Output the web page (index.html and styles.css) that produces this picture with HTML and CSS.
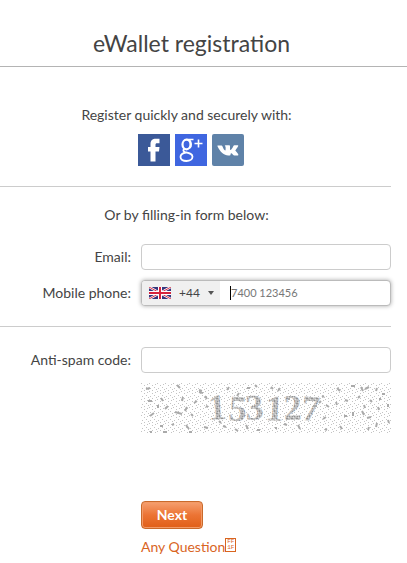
FILE: index.html
```html
<!DOCTYPE html>
<html lang="en">
<head>
    <meta charset="UTF-8">
    <meta name="viewport" content="width=device-width, initial-scale=1.0">
    <title>eWallet registration</title>
    <link rel="stylesheet" href="styles.css">
</head>
<body>
    <header class="header">
        <h1>eWallet registration</h1>
    </header>
    <main class="content">
        <section class="social">
            <p class="intro">Register quickly and securely with:</p>
            <div class="social-links">
                <a href="#facebook" aria-label="Facebook">
                    <svg width="32" height="32" viewBox="0 0 32 32">
                        <rect width="32" height="32" fill="#3b5998"/>
                        <path fill="#fff" d="M12.500 27.500V17.500H10V13h2.500V10c0-3.500 2-5.300 5.300-5.300h3.700v4.500h-2.400c-1.300 0-1.600.5-1.600 1.700V13h4l-.5 4.500h-3.500v10z"/>
                    </svg>
                </a>
                <a href="#google" aria-label="Google Plus">
                    <svg width="32" height="32" viewBox="0 0 32 32" fill="none" stroke="#fff">
                        <rect width="32" height="32" fill="#3f66e0" stroke="none"/>
                        <ellipse cx="11.500" cy="10.500" rx="4" ry="4.800" stroke-width="2.200"/>
                        <path stroke-width="1.400" d="M18.500 5.500h-7M14.500 6c2 2 2.500 6 .3 8"/>
                        <path stroke-width="1.800" d="M9.500 14.800c-2 1.700-1.200 2.700.5 3.200 4 1 7.500 1.500 7.500 4.800 0 2.500-2.700 4.200-6 4.200-3.700 0-6-1.500-6-3.900 0-2.600 2.400-4.100 5.500-4.600"/>
                        <path stroke-width="1.600" d="M23.500 5.500v8M19.500 9.500h8"/>
                    </svg>
                </a>
                <a href="#vk" aria-label="VK">
                    <svg width="32" height="32" viewBox="0 0 32 32">
                        <rect width="32" height="32" rx="2" fill="#5f82a8"/>
                        <path fill="#fff" d="M6 11.500h3.500c.5 0 .7.300.9.700.8 2.200 2 4.200 2.700 4.200.4 0 .5-.4.500-1.200v-2c-.1-1-.8-1-.8-1.400 0-.3.300-.6.800-.6h3.600c.6 0 .8.300.8.900v3.100c0 .5.200.7.400.7.700 0 2.200-2.200 3-4 .2-.4.500-.7 1-.7h3c.9 0 1 .5.700 1-.6 1.500-2.800 4-2.800 4.300 0 .5 2.500 2.500 3 3.900.3.700-.2 1.100-.9 1.100h-3c-1 0-2.200-2.300-3.200-2.300-.9 0-.3 2.300-1.500 2.300h-1.500c-4 0-8.200-3.500-10.700-9.200-.2-.5-.1-.8.500-.8z"/>
                    </svg>
                </a>
            </div>
        </section>
        <form class="form">
            <p class="intro">Or by filling-in form below:</p>
            <div class="row">
                <label for="email">Email:</label>
                <input class="field" type="email" id="email" name="email">
            </div>
            <div class="row">
                <label for="phone">Mobile phone:</label>
                <div class="field phone">
                    <div class="country">
                        <svg width="22" height="12" viewBox="0 0 22 12">
                            <rect width="22" height="12" fill="#35357c"/>
                            <path stroke="#fff" stroke-width="2.400" d="M0 0l22 12M22 0L0 12"/>
                            <path stroke="#d6344c" stroke-width="1" d="M0 0l22 12M22 0L0 12"/>
                            <path stroke="#fff" stroke-width="4" d="M11 0v12M0 6h22"/>
                            <path stroke="#d6233c" stroke-width="2" d="M11 0v12M0 6h22"/>
                        </svg>
                        <select class="code" name="code" aria-label="Country code">
                            <option selected>+44</option>
                        </select>
                        <svg width="6" height="4" viewBox="0 0 6 4"><path fill="#555" d="M0 0h6L3 4z"/></svg>
                    </div>
                    <span class="caret"></span>
                    <input class="number" type="tel" id="phone" name="phone" placeholder="7400 123456">
                </div>
            </div>
            <div class="row antispam">
                <label for="captcha">Anti-spam code:</label>
                <input class="field" type="text" id="captcha" name="captcha">
            </div>
            <div class="row">
                <svg class="captcha" width="250" height="50" viewBox="0 0 250 50">
                    <defs>
                        <pattern id="dots" width="8" height="8" patternUnits="userSpaceOnUse">
                            <path fill="#c4c4c4" d="M0 0h1v1H0zM3 2h1v1H3zM6 1h1v1H6zM1 5h1v1H1zM5 4h1v1H5zM7 6h1v1H7zM3 7h1v1H3z"/>
                        </pattern>
                        <pattern id="grain" width="5" height="5" patternUnits="userSpaceOnUse">
                            <path fill="#bdbdbd" d="M0 0h5v5H0z"/>
                            <path fill="#939393" d="M0 0h2v1H0zM3 2h1v2H3zM1 3h1v1H1z"/>
                            <path fill="#e2e2e2" d="M4 1h1v1H4zM2 4h1v1H2z"/>
                        </pattern>
                    </defs>
                    <rect width="250" height="50" fill="url(#dots)"/>
                    <text class="captcha-text" x="68 87 105 124 143 160" y="37" rotate="-4 4 -3 3 -2 4" fill="url(#grain)">153127</text>
                    <path fill="none" stroke="#aaa" stroke-width="2" d="M5 6l4-1M36 2l3 3M58 9l4 1M7 18h4M20 15l2 3M41 18l1-4M53 20l3-2M17 25v-3M24 26l3-3M9 33l4-3M34 29l7 2M44 28l2-4M50 31l2 2M19 43h3M31 42l2-1M45 42l3 4M22 49h4M48 49h3M9 49h2M58 7l3 1M86 7l2-3M106 5h3M114 2l2 2M130 4l2 2M137 8l2-3M98 10l-2 3M148 15v2M181 14l2-1M196 5l3 3M210 3h4M220 4l2 4M224 6l4-2M235 8l1-3M241 11h3M217 15l2-2M178 20l2-2M172 23h4M185 22l3 2M195 19l1 3M204 17l3 1M223 22l1 3M229 17l2 2M239 15v2M247 21v3M212 29v4M221 28l2 4M237 24l1 3M182 36l3-2M203 33h3M226 35l4-1M247 37l1 3M236 40l-1 4M227 47l1-3M199 43l2 3M184 46l2 1M143 41l3 1M157 42l2 4M134 45h2M116 47h3M105 42l2 4M82 43l3 1M94 46l3 2M78 38l2 2M64 13l2 3M65 23l2 1M63 44l4 1"/>
                </svg>
            </div>
            <div class="row actions">
                <button class="next" type="submit">Next</button>
            </div>
            <div class="row">
                <a class="question" href="#help">Any Question<span class="glyph">FF<br>1F</span></a>
            </div>
        </form>
    </main>
</body>
</html>
```
FILE: styles.css
```css
* { box-sizing: border-box; }
body {
    margin: 0;
    background: #fff;
    color: #444;
    font-family: Lato, "Open Sans", sans-serif;
    font-size: 14px;
    line-height: 20px;
}
h1, p { margin: 0; }
.header {
    padding: 27px 24px 7px 0;
    border-bottom: 1px solid #b4b4b4;
    text-align: center;
}
h1 {
    font-size: 23px;
    font-weight: normal;
    line-height: 32px;
    color: #444;
}
.content { margin-right: 16px; }
.intro {
    padding-right: 18px;
    text-align: center;
}
.social {
    padding: 38px 0 20px;
    border-bottom: 1px solid #ccc;
}
.social-links {
    display: flex;
    justify-content: center;
    gap: 5px;
    padding: 9px 9px 0 0;
}
.social-links a, .social-links svg { display: block; }
.form { padding-top: 18px; }
.form .intro { margin-bottom: 19px; }
.row {
    display: grid;
    grid-template-columns: 131px 1fr;
    column-gap: 10px;
    align-items: center;
    margin-bottom: 10px;
}
.row label { text-align: right; }
.field {
    width: 100%;
    height: 26px;
    padding: 0 8px;
    border: 1px solid #ccc;
    border-radius: 4px;
    background: #fff;
    font: inherit;
    outline: none;
}
.phone {
    display: flex;
    align-items: center;
    padding: 0;
    border-color: #bbb;
    box-shadow: 0 0 4px #aaa;
}
.country {
    display: flex;
    align-items: center;
    height: 24px;
    width: 78px;
    padding-left: 7px;
    border-radius: 3px 0 0 3px;
    background: #f0f0f0;
}
.code {
    appearance: none;
    width: 37px;
    padding: 0 0 0 8px;
    border: 0;
    background: none;
    color: #444;
    font: inherit;
    font-size: 12px;
}
.caret {
    width: 1px;
    height: 14px;
    margin-left: 10px;
    background: #000;
}
.number {
    flex: 1;
    min-width: 0;
    padding: 0;
    border: 0;
    background: none;
    font: inherit;
    font-size: 11px;
    outline: none;
}
.number::placeholder { color: #777; }
.antispam {
    margin-top: 20px;
    padding-top: 20px;
    border-top: 1px solid #ccc;
}
.captcha, .next, .question {
    grid-column: 2;
    justify-self: start;
}
.captcha { display: block; }
.captcha-text {
    font-family: "Liberation Serif", serif;
    font-size: 36px;
    font-weight: bold;
}
.actions { padding-top: 58px; margin-bottom: 8px; }
.next {
    width: 62px;
    height: 28px;
    padding: 0;
    border: 1px solid #c96a2c;
    border-radius: 4px;
    background: linear-gradient(#f5a070, #ec7434 50%, #e05f18);
    box-shadow: inset 0 0 0 1px #f39a66;
    color: #fff;
    font: inherit;
    font-weight: bold;
}
.question {
    display: flex;
    align-items: center;
    color: #d9651f;
    text-decoration: none;
}
.glyph {
    width: 11px;
    height: 14px;
    margin-bottom: 4px;
    border: 1px solid #d9651f;
    font-family: "Liberation Mono", monospace;
    font-size: 6px;
    line-height: 6px;
    text-align: center;
}
```
